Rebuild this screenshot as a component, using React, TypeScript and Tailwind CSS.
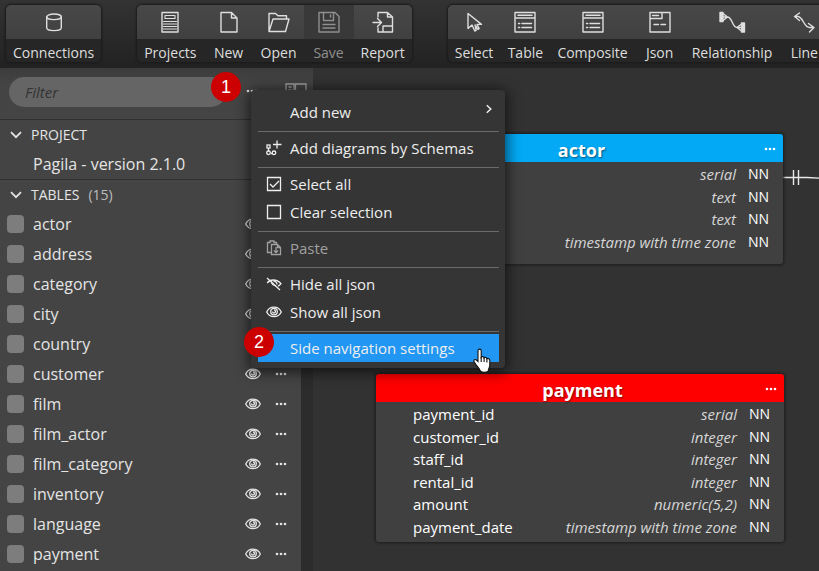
import type { ReactNode } from "react";
import clsx from "clsx";

const Icon = ({ children, size = 22 }: { children: ReactNode; size?: number }) => (
  <svg
    width={size}
    height={size}
    viewBox="0 0 22 22"
    fill="none"
    stroke="currentColor"
    strokeWidth="1.4"
    strokeLinejoin="round"
    strokeLinecap="round"
    className="block shrink-0 overflow-visible"
    aria-hidden="true"
  >
    {children}
  </svg>
);

const DatabaseIcon = () => (
  <Icon>
    <ellipse cx="11" cy="5.8" rx="7.3" ry="2.8" />
    <path d="M3.7 5.8v11c0 1.6 3.2 2.8 7.3 2.8s7.3-1.2 7.3-2.8v-11" />
  </Icon>
);

const ProjectsIcon = () => (
  <Icon>
    <path d="M3 1.5h16v19.5H3z" />
    <path d="M6 4.5h10v3H6zM4.5 10.5h13M4.5 13h13M4.5 15.5h13M4.5 18h13" strokeWidth="1.1" />
  </Icon>
);

const NewIcon = () => (
  <Icon>
    <path d="M3 1.5h10.5L19 7v14H3zM13.5 1.5V7H19" />
  </Icon>
);

const OpenIcon = () => (
  <Icon>
    <path d="M1 20.5V2.5h6.5L10 4.800h8.500V8M1 20.500 5 8h16l-3.500 12.500z" />
  </Icon>
);

const SaveIcon = () => (
  <Icon>
    <path d="M1 1.5h16l4 4V21H1z" />
    <path d="M5.500 1.500v8h10v-8M12.500 4v2M5 13.500h12M5 17h12" />
  </Icon>
);

const ReportIcon = () => (
  <Icon>
    <path d="M6 6V1.500h9.500L20.500 6v8M15.500 1.500V6h5M6 17v4h4M11 15h9.500v6H11zM1 11.500h8M5.500 7.500l4 4-4 4" />
  </Icon>
);

const SelectIcon = () => (
  <Icon>
    <path d="M5 2.500v15l4-3.500 2.800 6 1.300-.6-1-5.400 2.800 4.400 1.200-.8-2-4.200h4.400z" />
  </Icon>
);

const TableIcon = () => (
  <Icon>
    <path d="M1 1.500h20V21H1zM1 7h20" />
    <path d="M4 4.300h14M4.500 12.500h1.200M8 12.500h9.500M4.500 16.500h1.200M8 16.500h9.500" strokeWidth="1.500" />
  </Icon>
);

const JsonIcon = () => (
  <Icon>
    <path d="M1 1.500h20V21H1zM1 7.500h12v-6M3.500 4.500h6" />
    <path d="M5 13.500h4.500M12 13.500h4.500" />
  </Icon>
);

const RelationshipIcon = () => (
  <Icon>
    <path d="M-1 1.500h3v9h-3zM20.500 12h3v9h-3z" fill="currentColor" />
    <path d="M2 2.500 6.500 6 2 9.500M2 6h4.500c5 0 4.500 10.500 9.500 10.500h4.500M20.500 13 16 16.500l4.500 3.500" />
  </Icon>
);

const LineIcon = () => (
  <Icon>
    <path d="M6.500 2 1.500 5.500l5 4M1.500 5.500h3c6 0 6 11 12 11h4M15.500 12.500l5.500 4-4.500 4.500" />
  </Icon>
);

const EyeIcon = () => (
  <svg width="16" height="12" viewBox="0 0 16 12" fill="none" stroke="currentColor" strokeWidth="1.300" aria-hidden="true">
    <path d="M.7 6C2.300 2.600 5 1.200 8 1.200S13.700 2.600 15.300 6C13.700 9.400 11 10.600 8 10.600S2.300 9.400.7 6z" />
    <circle cx="8" cy="5.600" r="3.300" />
    <path d="M6.500 5.500a1.500 1.500 0 1 0 1.500-1.500" />
  </svg>
);

const EyeOffIcon = () => (
  <svg width="16" height="14" viewBox="0 0 16 14" fill="none" stroke="currentColor" strokeWidth="1.300" aria-hidden="true">
    <path d="M1 1l13 12M1.200 6C3 3.600 4.800 3 7 3c3.500 0 6 1.200 8 3.600-.8 1.200-1.800 2-3 2.600" />
    <path d="M5.500 4.500c0 2.500 2 4.500 4.500 4M7.500 4.500c2-.5 3.500 1 3.500 3" />
  </svg>
);

const DotsIcon = () => (
  <svg width="12" height="4" viewBox="0 0 12 4" fill="currentColor" aria-hidden="true">
    <circle cx="2" cy="2" r="1.300" />
    <circle cx="6" cy="2" r="1.300" />
    <circle cx="10" cy="2" r="1.300" />
  </svg>
);

const DiagramsIcon = () => (
  <svg width="16" height="16" viewBox="0 0 16 16" fill="none" stroke="currentColor" strokeWidth="1.300" aria-hidden="true">
    <path d="M11 .5v8M7 4.500h8.500M2.500 8v3M5 13.500h2" />
    <rect x="1" y="5" width="3" height="3" />
    <circle cx="2.500" cy="12.800" r="1.800" />
    <circle cx="8" cy="12.800" r="1.800" />
  </svg>
);

const CheckedIcon = () => (
  <svg width="16" height="16" viewBox="0 0 16 16" fill="none" stroke="currentColor" strokeWidth="1.300" aria-hidden="true">
    <path d="M1.500 1.500h13v13h-13zM4 8l3 3 6-6" />
  </svg>
);

const UncheckedIcon = () => (
  <svg width="16" height="16" viewBox="0 0 16 16" fill="none" stroke="currentColor" strokeWidth="1.300" aria-hidden="true">
    <path d="M1.500 1.500h13v13h-13z" />
  </svg>
);

const PasteIcon = () => (
  <svg width="16" height="16" viewBox="0 0 16 16" fill="none" stroke="currentColor" strokeWidth="1.300" aria-hidden="true">
    <path d="M5 12.500H1.500v-10H4V1h4v1.500h2.500V4M5.500 4.500h6l3 3v7h-9zM11.500 4.500v3h3M10 7v5.500M7.800 10.500l2.200 2.200 2.200-2.200" />
  </svg>
);

const ChevronDown = () => (
  <svg width="12" height="8" viewBox="0 0 12 8" fill="none" stroke="currentColor" strokeWidth="1.700" aria-hidden="true">
    <path d="M1 1.200 6 6.200l5-5" />
  </svg>
);

const PanelIcon = () => (
  <svg width="22" height="16" viewBox="0 0 22 16" fill="none" stroke="currentColor" strokeWidth="1.300" aria-hidden="true">
    <path d="M1 1h8v14H1zM10.500 1h10.500v14H10.500zM3.500 4h3M3.500 7h3M3.500 10h3" />
  </svg>
);

const HandCursor = () => (
  <svg width="19" height="26" viewBox="0 0 19 26" aria-hidden="true">
    <path
      d="M5 2.800c0-2.200 3.200-2.200 3.200 0v6.400c.7-1 2.700-.8 2.900.6.900-.8 2.600-.4 2.800.9 1.100-.7 2.900.1 2.900 1.600v5c0 2-1.600 3.700-1.600 5.700-1.500 1.800-6.200 1.800-7.900 0-.6-2.800-3-4.200-4.600-6.800L1 13.600c-.7-1.800 1.200-2.700 2.400-1.600L5 13.500z"
      fill="#fff"
      stroke="#111"
      strokeWidth="1.100"
    />
    <path d="M8.200 9v5M11.100 10v4M13.900 11v3.500" stroke="#111" strokeWidth="1.100" />
  </svg>
);

type Tool = { label: string; icon: ReactNode; disabled?: boolean };

const toolGroups: Tool[][] = [
  [{ label: "Connections", icon: <DatabaseIcon /> }],
  [
    { label: "Projects", icon: <ProjectsIcon /> },
    { label: "New", icon: <NewIcon /> },
    { label: "Open", icon: <OpenIcon /> },
    { label: "Save", icon: <SaveIcon />, disabled: true },
    { label: "Report", icon: <ReportIcon /> }
  ],
  [
    { label: "Select", icon: <SelectIcon /> },
    { label: "Table", icon: <TableIcon /> },
    { label: "Composite", icon: <TableIcon /> },
    { label: "Json", icon: <JsonIcon /> },
    { label: "Relationship", icon: <RelationshipIcon /> },
    { label: "Line", icon: <LineIcon /> }
  ]
];

const tables = [
  "actor", "address", "category", "city", "country", "customer", "film",
  "film_actor", "film_category", "inventory", "language", "payment"
];

type MenuEntry = { label: string; icon?: ReactNode; disabled?: boolean; active?: boolean; submenu?: boolean };

const menuSections: MenuEntry[][] = [
  [{ label: "Add new", submenu: true }],
  [{ label: "Add diagrams by Schemas", icon: <DiagramsIcon /> }],
  [
    { label: "Select all", icon: <CheckedIcon /> },
    { label: "Clear selection", icon: <UncheckedIcon /> }
  ],
  [{ label: "Paste", icon: <PasteIcon />, disabled: true }],
  [
    { label: "Hide all json", icon: <EyeOffIcon /> },
    { label: "Show all json", icon: <EyeIcon /> }
  ],
  [{ label: "Side navigation settings", active: true }]
];

const Toolbar = () => (
  <header className="flex h-[68px] shrink-0 gap-9 overflow-hidden bg-linear-to-b from-[#333333] to-[#222222] pt-[5px] pl-1.5 shadow-[0_1px_6px_#00000080]">
    {toolGroups.map((group, i) => (
      <div key={i} className="flex h-[57px] shrink-0 overflow-hidden rounded-[5px] shadow-[0_0_2px_1px_#1a1a1a]">
        {group.map((tool) => (
          <button
            key={tool.label}
            disabled={tool.disabled}
            className={clsx("flex min-w-[50px] flex-col", tool.disabled ? "text-[#8f8f8f]" : "text-[#dedede]")}
          >
            <span
              className={clsx(
                "flex h-[34px] w-full items-center justify-center",
                tool.disabled ? "bg-[#393939]" : "bg-linear-to-b from-[#484848] to-[#404040]"
              )}
            >
              {tool.icon}
            </span>
            <span className="h-[23px] w-full bg-[#262626] px-[7px] pt-1 text-center text-sm leading-[19px]">
              {tool.label}
            </span>
          </button>
        ))}
      </div>
    ))}
  </header>
);

const Sidebar = () => (
  <aside className="flex w-[313px] shrink-0 flex-col bg-[#444444] text-[#e4e4e4]">
    <div className="flex h-[51px] shrink-0 items-start bg-linear-to-b from-[#3c3c3c] to-[#444444] to-30% pt-[9px] pl-[9px]">
      <input
        type="text"
        placeholder="Filter"
        aria-label="Filter"
        className="h-[30px] w-[217px] rounded-full bg-[#656565] px-4 text-[15px] italic placeholder:text-[#333333]"
      />
      <button aria-label="More options" className="mt-3 ml-5">
        <DotsIcon />
      </button>
      <button aria-label="Toggle panel" className="mt-1.5 ml-[27px] text-[#a0a0a0]">
        <PanelIcon />
      </button>
    </div>

    <div className="flex min-h-0 flex-1">
      <div className="min-w-0 flex-1 overflow-hidden border-t border-[#303030]">
        <section className="h-[60px] border-b border-[#303030]">
          <button className="flex h-[30px] items-center gap-[9px] pl-[10px] text-sm">
            <ChevronDown />
            PROJECT
          </button>
          <p className="pl-[33px] text-base leading-7">Pagila - version 2.1.0</p>
        </section>

        <section>
          <button className="flex h-[29px] items-center gap-[9px] pl-[10px] text-sm">
            <ChevronDown />
            TABLES
            <span className="text-[#bdbdbd]">(15)</span>
          </button>
          <ul>
            {tables.map((name) => (
              <li key={name} className="flex h-[30px] items-center pr-[14px] pl-[7px]">
                <label className="flex flex-1 items-center gap-[9px] text-base">
                  <input type="checkbox" className="h-[18px] w-[17px] appearance-none rounded-sm bg-[#7d7d7d]" />
                  {name}
                </label>
                <button aria-label={`Show ${name}`}>
                  <EyeIcon />
                </button>
                <button aria-label={`${name} options`} className="ml-[14px]">
                  <DotsIcon />
                </button>
              </li>
            ))}
          </ul>
        </section>
      </div>
      <div className="w-3 bg-[#2c2c2c]" />
    </div>
  </aside>
);

const Entity = ({
  name,
  headerClass,
  tableClass,
  rows
}: {
  name: string;
  headerClass: string;
  tableClass: string;
  rows: [string, string][];
}) => (
  <div className="w-[408px] overflow-hidden rounded-[3px] bg-[#404040] shadow-[0_0_3px_1px_#1c1c1c]">
    <div className={clsx("flex h-7 items-center pt-0.5 pr-[7px] pl-6 text-white", headerClass)}>
      <h2 className="flex-1 pt-0.5 text-center text-lg leading-6 font-bold [text-shadow:1px_1px_2px_#00000080]">{name}</h2>
      <button aria-label={`${name} options`}>
        <DotsIcon />
      </button>
    </div>
    <table className={clsx("mt-px w-full text-[15px] leading-5", tableClass)}>
      <tbody>
        {rows.map(([column, type], i) => (
          <tr key={i}>
            <td className="p-0 pl-[37px] text-white">{column}</td>
            <td className="p-0 text-right text-[#d6d6d6] italic">{type}</td>
            <td className="w-[47px] p-0 pl-3 text-sm font-medium text-white">NN</td>
          </tr>
        ))}
      </tbody>
    </table>
  </div>
);

const Canvas = () => (
  <main className="relative min-w-0 flex-1 overflow-hidden bg-[#323232]">
    <svg className="absolute top-[100px] left-[470px]" width="40" height="20" fill="none" stroke="#e8e8e8" aria-hidden="true">
      <path d="M0 9.500h24l16 .8M10.500 2v15M15.500 2v15" strokeWidth="1.400" />
    </svg>
    <div className="absolute top-[66px] left-[62px]">
      <Entity
        name="actor"
        headerClass="bg-[#03a9f4]"
        tableClass="h-[90px] mb-[11px]"
        rows={[
          ["", "serial"],
          ["", "text"],
          ["", "text"],
          ["", "timestamp with time zone"]
        ]}
      />
    </div>
    <div className="absolute top-[306px] left-[63px]">
      <Entity
        name="payment"
        headerClass="bg-[#ff0000]"
        tableClass="h-[135px] mb-1"
        rows={[
          ["payment_id", "serial"],
          ["customer_id", "integer"],
          ["staff_id", "integer"],
          ["rental_id", "integer"],
          ["amount", "numeric(5,2)"],
          ["payment_date", "timestamp with time zone"]
        ]}
      />
    </div>
  </main>
);

const ContextMenu = () => (
  <div
    role="menu"
    className="absolute top-[90px] left-[251px] w-[254px] rounded-sm bg-[#353535] pt-2 pr-1.5 pb-1.5 pl-[7px] shadow-[0_2px_14px_2px_#000000a0]"
  >
    {menuSections.map((section, i) => (
      <div key={i} className={clsx(i > 0 && "mt-[5px] border-t border-[#6a6a6a] pt-0.5")}>
        {section.map((item) => (
          <button
            key={item.label}
            role="menuitem"
            disabled={item.disabled}
            className={clsx(
              "flex h-7 w-full items-center text-left text-[15px]",
              item.active && "bg-[#2196f3]",
              item.disabled ? "text-[#a0a0a0]" : "text-[#eeeeee]"
            )}
          >
            <span className="flex w-8 justify-center">{item.icon}</span>
            <span className="flex-1">{item.label}</span>
            {item.submenu && (
              <svg width="6" height="10" viewBox="0 0 6 10" fill="none" stroke="currentColor" strokeWidth="1.500" className="mr-[7px] mb-1.5" aria-hidden="true">
                <path d="M.8 1.200 4.800 5l-4 3.800" />
              </svg>
            )}
          </button>
        ))}
      </div>
    ))}
  </div>
);

const StepBadge = ({ step, className }: { step: number; className: string }) => (
  <span
    className={clsx(
      "absolute flex size-[30px] items-center justify-center rounded-full bg-[#cc0000] font-['Liberation_Sans',sans-serif] text-lg text-white",
      className
    )}
  >
    {step}
  </span>
);

const App = () => {
  return (
    <div className="relative flex h-screen flex-col overflow-hidden bg-[#323232] font-['Open_Sans','Noto_Sans',sans-serif]">
      <Toolbar />
      <div className="flex min-h-0 flex-1">
        <Sidebar />
        <Canvas />
      </div>
      <ContextMenu />
      <StepBadge step={1} className="top-[72px] left-[211px]" />
      <StepBadge step={2} className="top-[327px] left-[244px]" />
      <div className="pointer-events-none absolute top-[348px] left-[473px]">
        <HandCursor />
      </div>
    </div>
  );
};

export default App;
